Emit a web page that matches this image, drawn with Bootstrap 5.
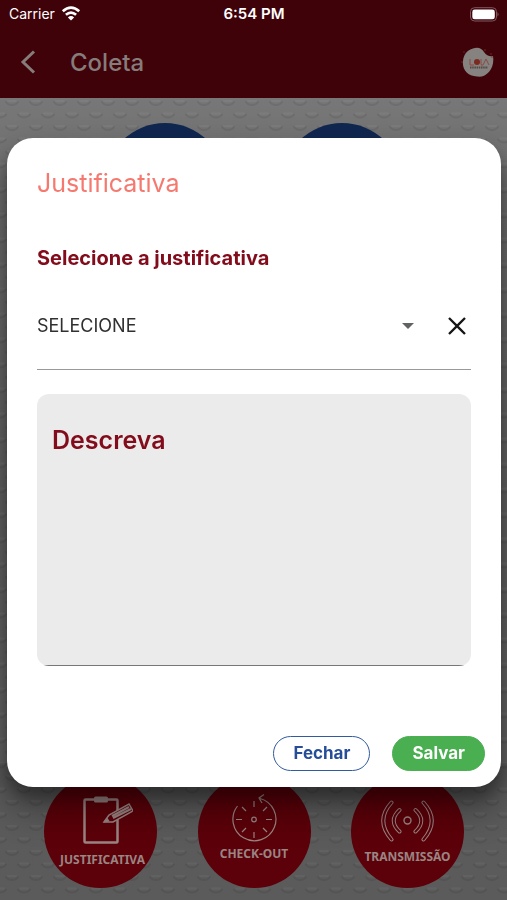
<!DOCTYPE html>
<html lang="pt-BR">
<head>
<meta charset="utf-8">
<meta name="viewport" content="width=device-width, initial-scale=1">
<title>Coleta</title>
<link href="https://cdn.jsdelivr.net/npm/bootstrap@5.3.0/dist/css/bootstrap.min.css" rel="stylesheet">
<style>
body{font-family:Inter,"Liberation Sans",sans-serif;background:#6c6c6c;color:#333;overflow:hidden}
.topbar{background:#3f0209;color:#857c7b}
.status{height:28px;color:#fff;font-size:14px;line-height:28px;padding:0 8px 0 9px}
.status-side{flex:1 1 0;gap:6px}
.status strong{font-size:15px;font-weight:600}
.titlebar{height:70px;padding:0 12px 0 20px}
.titlebar h1{font-size:24px;font-weight:500;line-height:32px;padding-left:34px}
.icon-btn{background:none;border:0;padding:0;color:inherit;line-height:0}
.stage{position:relative}
.texture{position:absolute;inset:0;width:100%;height:100%}
.tiles{position:relative;padding:25px 77px 0}
.blue-tile{width:122px;height:122px;border-radius:50%;background:#102750}
.bottom-tiles{position:relative;background:#0000001a;padding:12px 43px 12px 44px}
.red-tile{width:113px;height:113px;border-radius:50%;background:#5c0009;color:#9a8583;border:0;padding:0;font:bold 12px/16px "Noto Sans",sans-serif}
.red-tile svg{display:block}
.modal.sheet{top:24px;height:calc(100% - 24px)}
.sheet .modal-dialog{margin:0 6px 0 7px;max-width:none;min-height:100%}
.sheet .modal-content{border:0;border-radius:26px;box-shadow:0 11px 15px #0004,0 20px 36px 3px #0005;padding:29px 30px 16px}
.sheet h2{font-size:25px;line-height:32px;font-weight:400;color:#f5796f}
.field-label{font-size:20px;line-height:28px;font-weight:700;color:#820c1b;margin-top:45px}
.select-row{border-bottom:1px solid #999;height:98px;padding-top:11px}
.reason{appearance:none;background:transparent;border:0;font-size:18px;line-height:24px;color:#303030;padding:0}
.caret-mark{pointer-events:none}
.describe{background:linear-gradient(#777,#777) bottom/100% 1px no-repeat #ebebeb;border:0;border-radius:12px;height:272px;padding:28px 15px;font-size:25px;line-height:36px;font-weight:600;color:#820c1b;resize:none;margin-top:24px}
.describe::placeholder{color:#820c1b;opacity:1}
.actions{margin-top:70px;gap:22px;margin-right:-14px}
.pill{height:35px;border-radius:18px;font-size:17px;line-height:24px;font-weight:700;padding:0 19px}
.pill-close{border:1px solid #315aa0;color:#264d98;background:#fff}
.pill-save{border:1px solid #49af50;background:#49af50;color:#fff}
</style>
<script src="https://cdn.jsdelivr.net/npm/bootstrap@5.3.0/dist/js/bootstrap.bundle.min.js"></script>
</head>
<body>
<div class="d-flex flex-column min-vh-100">
<header class="topbar">
  <div class="status d-flex align-items-center">
    <span class="status-side d-flex align-items-center">Carrier
      <svg width="20" height="16" viewBox="0 0 20 16" fill="none" stroke="#fff" stroke-width="2.7" aria-hidden="true"><path d="M1.8 5.3Q10-2 18.2 5.3M4.9 8.8Q10 4.4 15.1 8.8"/><path d="M10 14.5 6.9 11.4Q10 8.8 13.1 11.4Z" fill="#fff" stroke="none"/></svg>
    </span>
    <strong>6:54 PM</strong>
    <span class="status-side d-flex justify-content-end">
      <svg width="30" height="15" viewBox="0 0 30 15" aria-hidden="true"><rect x="1.5" y=".7" width="26" height="13.3" rx="4" fill="none" stroke="#80585e"/><rect x="3.300" y="2.5" width="22.5" height="9.8" rx="2.4" fill="#fff"/><path d="M28.500 5Q30.500 7.3 28.500 9.7Z" fill="#80585e"/></svg>
    </span>
  </div>
  <div class="titlebar d-flex align-items-center">
    <button class="icon-btn" aria-label="Voltar"><svg width="16" height="26" viewBox="0 0 16 26" fill="none" stroke="currentColor" stroke-width="3"><path d="M14 1.500 3 12 14 22.500"/></svg></button>
    <h1 class="m-0 flex-fill">Coleta</h1>
    <svg width="34" height="32" viewBox="0 0 34 32" role="img" aria-label="Logo"><path d="M12 1.500C17-.5 21 1.500 23 5c2.500 4 6 4.500 9 4 2 12-6 22-16 20.500C6 29 1 22 2 14c.5-6 4-11 10-12.500Z" fill="#858280"/><g fill="#7c2920"><circle cx="3" cy="5" r=".7"/><circle cx="1" cy="15" r=".8"/><circle cx="24" cy="3" r=".8"/><circle cx="30" cy="7" r=".8"/><circle cx="31" cy="10" r=".7"/><circle cx="16" cy="15" r="3"/></g><path d="M9 12v6h4M20 12v5q0 2 2 1l3-6 3 6" fill="none" stroke="#8c4a43" stroke-width="1"/><path d="M9 20.500h18" stroke="#554845" stroke-width="2" stroke-dasharray="1.500 .7"/></svg>
  </div>
</header>
<main class="stage flex-fill d-flex flex-column justify-content-between">
  <svg class="texture" aria-hidden="true"><defs>
    <linearGradient id="lift" x1="0" y1="0" x2="0" y2="1"><stop offset="0" stop-color="#777"/><stop offset=".12" stop-color="#707070"/><stop offset=".5" stop-color="#646464"/><stop offset="1" stop-color="#666"/></linearGradient>
    <pattern id="bumps" width="24" height="25" patternUnits="userSpaceOnUse"><g fill="none" stroke-width="2" stroke-linecap="round"><path d="M6 4Q8 7 12 7T18 4M-6 16.500Q-4 19.500 0 19.500T6 16.500M18 16.500Q20 19.500 24 19.500T30 16.500" stroke="#00000014"/><path d="M8 3H16M0 15.500H4M20 15.500H24" stroke="#ffffff0b"/></g></pattern></defs>
    <rect width="100%" height="100%" fill="url(#lift)"/><rect width="100%" height="100%" fill="url(#bumps)"/></svg>
  <div class="tiles d-flex justify-content-around">
    <div class="blue-tile"></div><div class="blue-tile"></div>
  </div>
  <div class="bottom-tiles d-flex justify-content-between">
    <button class="red-tile d-flex flex-column align-items-center">
      <svg width="64" height="77" viewBox="0 0 64 77" fill="none" stroke="currentColor"><rect x="15.500" y="24.500" width="33" height="43" rx="1" stroke-width="2.500"/><rect x="25" y="21.500" width="14" height="6" rx="1.500" fill="currentColor" stroke="none"/><path d="m35 47 5-7 20-11 4 7-20 11Z" fill="#5c0009" stroke-width="1.500"/><path d="m43 41 17-9m-16 11 18-9" stroke-width="2"/><path d="m35 47 3-4 2 3Z" fill="currentColor"/></svg><span class="ps-1">JUSTIFICATIVA</span>
    </button>
    <button class="red-tile d-flex flex-column align-items-center">
      <svg width="64" height="71" viewBox="0 0 64 71" fill="none" stroke="currentColor" stroke-width="1.200"><path d="M15.500 31A21.500 21.500 0 1 0 38 23.500M42 19.500l-5 3.500 3 5"/><circle cx="32" cy="44.500" r="2.300"/><path d="M32 26v6m0 25v6M14 44.500h6m24 0h6M20 32l4 4m17 17 4 4M20 57l4-4m17-17 4-4"/></svg><span>CHECK-OUT</span>
    </button>
    <button class="red-tile d-flex flex-column align-items-center">
      <svg width="64" height="74" viewBox="0 0 64 74" fill="none"><circle cx="31.500" cy="45.500" r="3.500" stroke="currentColor" stroke-width="1.400"/><g stroke-linecap="round"><g stroke="currentColor" stroke-width="4"><path id="wave" d="M15.500 27.500Q-1 45.500 15.500 64.500M23.500 35Q12 45.500 23.500 56.500M47.500 27.500Q64 45.500 47.500 64.500M39.500 35Q51 45.500 39.500 56.500"/></g><use href="#wave" stroke="#5c0009" stroke-width="2"/></g></svg><span>TRANSMISSÃO</span>
    </button>
  </div>
</main>
</div>
<div class="modal sheet d-block overflow-visible" role="dialog" aria-modal="true" aria-labelledby="dialog-title">
  <div class="modal-dialog modal-dialog-centered">
    <form class="modal-content">
      <h2 id="dialog-title" class="m-0">Justificativa</h2>
      <label class="field-label" for="reason">Selecione a justificativa</label>
      <div class="select-row d-flex align-items-center">
        <select id="reason" class="reason flex-fill"><option>SELECIONE</option></select>
        <svg class="caret-mark" width="14" height="8" viewBox="0 0 14 8" aria-hidden="true"><path d="M1 1h12L7 7Z" fill="#606264"/></svg>
        <button type="button" class="icon-btn ms-4 ps-2 pe-1" aria-label="Limpar"><svg width="20" height="20" viewBox="0 0 20 20" fill="none" stroke="#151515" stroke-width="2.300"><path d="m2 2 16 16M18 2 2 18"/></svg></button>
      </div>
      <textarea class="describe w-100" placeholder="Descreva" aria-label="Descreva"></textarea>
      <div class="actions d-flex justify-content-end">
        <button type="button" class="pill pill-close">Fechar</button>
        <button type="submit" class="pill pill-save">Salvar</button>
      </div>
    </form>
  </div>
</div>
</body>
</html>
